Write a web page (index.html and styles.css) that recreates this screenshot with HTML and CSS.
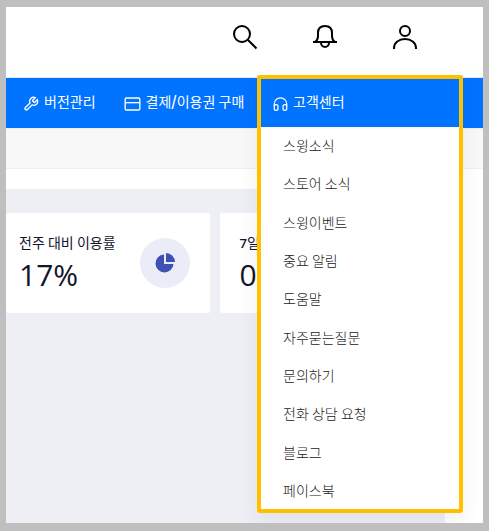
FILE: index.html
```
<!DOCTYPE html>
<html lang="ko">
<head>
<meta charset="utf-8">
<title>고객센터</title>
<link rel="stylesheet" href="styles.css">
</head>
<body>
<div class="app">
  <header class="top">
    <svg viewBox="0 0 26 26"><circle cx="10" cy="10" r="8"/><path d="M16 16l8.500 8.500"/></svg>
    <svg viewBox="0 0 26 26"><path d="M1 18h24M3 18C5.500 16.500 6 14.500 6 12V9C6 4.500 8.500 2 13 2s7 2.500 7 7v3c0 2.500.5 4.500 3 6M9 18.500c0 6 8 6 8 0"/></svg>
    <svg viewBox="0 0 26 26"><circle cx="13" cy="7" r="5"/><path d="M2 25v-1c0-5.500 5-9 11-9s11 3.500 11 9v1"/></svg>
  </header>
  <nav class="nav">
    <a class="link version"><svg viewBox="0 0 24 24"><path d="M14.700 6.300a1 1 0 0 0 0 1.400l1.600 1.600a1 1 0 0 0 1.400 0l3.770-3.770a6 6 0 0 1-7.940 7.940l-6.910 6.910a2.120 2.120 0 0 1-3-3l6.910-6.910a6 6 0 0 1 7.940-7.940z"/></svg><span>버전관리</span></a>
    <a class="link pay"><svg viewBox="0 0 24 24"><rect x="1" y="3" width="22" height="18" rx="2"/><path d="M1 10h22"/></svg><span>결제<b>/</b>이용권 구매</span></a>
  </nav>
  <div class="subnav"></div>
  <main class="content">
    <section class="card">
      <div><div class="label">전주 대비 이용률</div><div class="value">17%</div></div>
      <div class="badge"><svg viewBox="0 0 20 20"><path d="M9 1.500A9 9 0 1 0 18.500 11H9z"/><path d="M11 0a9 9 0 0 1 9 9h-9z"/></svg></div>
    </section>
    <section class="card">
      <div><div class="label"><b>7</b>일</div><div class="value">0</div></div>
    </section>
  </main>
  <div class="menu">
    <div class="menu-title"><svg viewBox="0 0 24 24"><path d="M2 19v-7a10 10 0 0 1 20 0v7M22 19a3 3 0 0 1-6 0v-3a3 3 0 0 1 6 0zM2 19a3 3 0 0 0 6 0v-3a3 3 0 0 0-6 0z"/></svg><span>고객센터</span></div>
    <ul>
      <li>스윙소식</li><li>스토어 소식</li><li>스윙이벤트</li><li>중요 알림</li><li>도움말</li>
      <li>자주묻는질문</li><li>문의하기</li><li>전화 상담 요청</li><li>블로그</li><li>페이스북</li>
    </ul>
  </div>
</div>
</body>
</html>
```
FILE: styles.css
```
* { box-sizing: border-box; }
body { margin: 0; background: #bfbfbf; font: 14px/20px "Noto Sans CJK KR", sans-serif; word-spacing: -.7px; }
.app {
  width: 489px; height: 531px; overflow: hidden; position: relative;
  border: solid #bfbfbf; border-width: 7px 6px 8px; background: #fff;
}
svg { fill: none; stroke: currentColor; flex: none; }
.top {
  height: 71px; display: flex; gap: 54px; padding: 17px 0 0 226px;
  border-bottom: 1px solid #e8e8e8; color: #000;
}
.top svg { width: 26px; height: 26px; stroke-width: 2; }
.nav { height: 50px; background: #0073ff; color: #fff; display: flex; padding-left: 17px; }
.link, .menu-title { display: flex; align-items: center; white-space: nowrap; }
.link svg { width: 16px; height: 16px; stroke-width: 2; margin-top: 2px; }
.link span, .menu-title span { position: relative; top: -2px; }
.version { width: 101px; gap: 5px; }
.pay { gap: 5px; }
.pay svg { width: 17px; }
.pay span { margin-left: -.5px; }
.subnav { height: 41px; background: #f8f8f8; border: solid #efefef; border-width: 1px 0; }
.content {
  width: 439px; height: 334px; margin-top: 20px; padding-top: 24px;
  background: #eeeff5; display: flex; gap: 10px; align-items: flex-start;
}
.card {
  width: 204px; height: 100px; flex: none; background: #fff; border-radius: 2px;
  padding: 19px 20px 0 13px; display: flex; justify-content: space-between; color: #11142b;
}
.card + .card { padding-left: 19.500px; }
.label { white-space: nowrap; }
.label b { font: 600 13px "Open Sans", sans-serif; }
.value { font: 30px/45px "Open Sans", sans-serif; }
.badge {
  width: 50px; height: 50px; margin-top: 6px; border-radius: 50%; background: #eaedf7;
  display: flex; align-items: center; justify-content: center;
}
.badge svg { width: 20px; height: 20px; fill: #3f51b5; stroke: none; }
.menu {
  position: absolute; left: 251px; top: 68px; width: 206px; height: 438px;
  border: 4px solid #ffc000; border-radius: 3px; background: #fff;
  box-shadow: 0 8px 20px rgba(40, 45, 80, .07);
}
.menu-title { height: 48px; padding-left: 12px; gap: 5px; background: #0073ff; color: #fff; }
.menu-title svg { width: 15px; height: 16px; stroke-width: 2; margin-top: 1px; }
.menu ul { list-style: none; margin: 0; padding: 0 0 0 22px; color: #222; }
.menu li { height: 38.350px; line-height: 36px; font-weight: 300; }
```
